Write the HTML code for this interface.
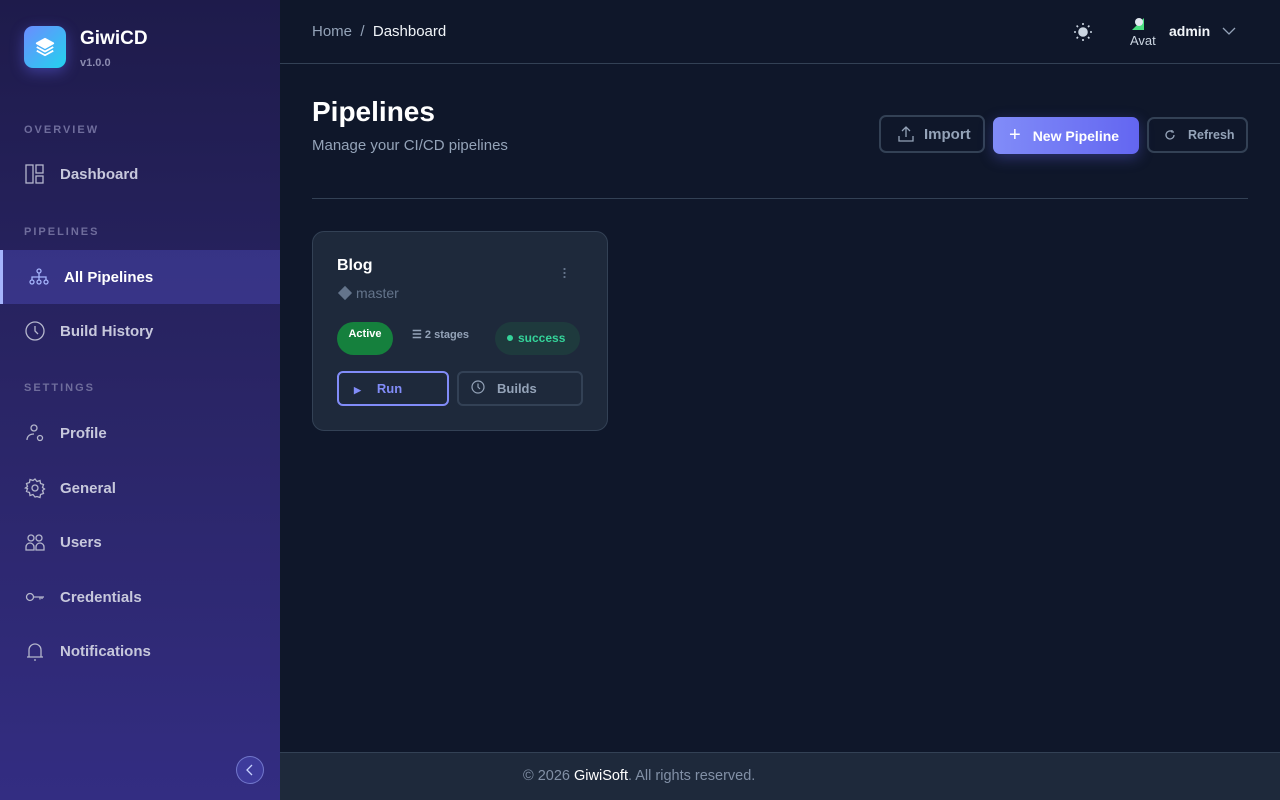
<!DOCTYPE html>
<html><head><meta charset="utf-8"><style>
*{box-sizing:border-box;margin:0;padding:0}
body{width:1280px;height:800px;overflow:hidden;font-family:"Liberation Sans",sans-serif;background:#0f172a;position:relative}
.sb{position:absolute;left:0;top:0;width:280px;height:800px;background:linear-gradient(180deg,#1e1b4b 0%,#2a2566 50%,#332d82 100%)}
.logo{position:absolute;left:24px;top:26px;width:42px;height:42px;border-radius:9px;background:linear-gradient(135deg,#6b8cff,#22d3ee);box-shadow:0 4px 14px rgba(99,102,241,.45);display:flex;align-items:center;justify-content:center}
.brand{position:absolute;left:80px;top:28px;color:#fff;font-weight:bold;font-size:19px}
.ver{position:absolute;left:80px;top:57px;color:#8b8bb0;font-size:11px;font-weight:bold}
.sec{position:absolute;left:24px;color:#6f6d9c;font-size:11px;font-weight:bold;letter-spacing:2px}
.it{position:absolute;left:0;width:280px;height:54px;display:flex;align-items:center;padding-left:24px;color:#c7c8dc;font-size:15px;font-weight:bold}
.it svg{width:22px;height:22px;margin-right:14px;stroke:#b4b6cc;fill:none;stroke-width:1.3}
.act{background:rgba(99,102,241,.28);border-left:3px solid #a5b4fc;padding-left:25px;color:#fff}
.act svg{stroke:#a5b4fc}
.col{position:absolute;left:236px;top:756px;width:28px;height:28px;border-radius:50%;border:1px solid rgba(165,180,252,.5);background:rgba(99,102,241,.25);display:flex;align-items:center;justify-content:center}
.top{position:absolute;left:280px;top:0;width:1000px;height:64px;border-bottom:1px solid #334155}
.bc{position:absolute;left:32px;top:23px;font-size:15px;color:#94a3b8}
.bc b{color:#f1f5f9;font-weight:normal}
h1{position:absolute;left:312px;top:96px;color:#fff;font-size:28px}
.sub{position:absolute;left:312px;top:137px;color:#94a3b8;font-size:15px}
.btn{position:absolute;height:38px;border-radius:7px;border:2px solid #334155;color:#94a3b8;font-weight:bold;font-size:14px;display:flex;align-items:center}
.hr{position:absolute;left:312px;top:198px;width:936px;height:1px;background:#334155}
.card{position:absolute;left:312px;top:231px;width:296px;height:200px;border-radius:12px;background:#1e293b;border:1px solid #334155}
.foot{position:absolute;left:280px;top:752px;width:1000px;height:48px;background:#1e293b;border-top:1px solid #334155;color:#8290a6;font-size:14.5px}
</style></head><body>
<div class="sb">
<div class="logo"><svg width="22" height="22" viewBox="0 0 24 24" fill="none" stroke="#fff" stroke-width="2" stroke-linejoin="round"><path d="M12 3l9 5-9 5-9-5z" fill="#fff"/><path d="M3 12l9 5 9-5M3 16l9 5 9-5"/></svg></div>
<div class="brand">GiwiCD</div><div class="ver">v1.0.0</div>
<div class="sec" style="top:124px">OVERVIEW</div>
<div class="it" style="top:147px"><svg viewBox="0 0 22 22"><rect x="2" y="2" width="7" height="18"/><rect x="12" y="2" width="7" height="8"/><rect x="12" y="13" width="7" height="7"/></svg>Dashboard</div>
<div class="sec" style="top:226px">PIPELINES</div>
<div class="it act" style="top:250px"><svg viewBox="0 0 22 22"><circle cx="11" cy="5" r="2"/><circle cx="4" cy="16" r="2"/><circle cx="11" cy="16" r="2"/><circle cx="18" cy="16" r="2"/><path d="M11 7v7M4 14v-3h14v3"/></svg>All Pipelines</div>
<div class="it" style="top:304px"><svg viewBox="0 0 22 22"><circle cx="11" cy="11" r="9"/><path d="M11 6v5l3 3"/></svg>Build History</div>
<div class="sec" style="top:382px">SETTINGS</div>
<div class="it" style="top:406px"><svg viewBox="0 0 22 22"><circle cx="10" cy="6" r="3"/><path d="M3 18c0-4 3-6 7-6"/><circle cx="16" cy="16" r="2.5"/></svg>Profile</div>
<div class="it" style="top:461px"><svg viewBox="0 0 22 22"><circle cx="11" cy="11" r="3"/><path d="M11 2l2 2.5 3-1 .5 3 3 1-1 3 2 1.5-2 1.5 1 3-3 1-.5 3-3-1L11 20l-2-2.5-3 1-.5-3-3-1 1-3L1.5 11l2-1.5-1-3 3-1 .5-3 3 1z"/></svg>General</div>
<div class="it" style="top:515px"><svg viewBox="0 0 22 22"><circle cx="7" cy="7" r="3"/><circle cx="15" cy="7" r="3"/><path d="M2 19v-3a4 4 0 018 0v3zM12 19v-3a4 4 0 018 0v3z"/></svg>Users</div>
<div class="it" style="top:570px"><svg viewBox="0 0 22 22"><circle cx="6" cy="11" r="3.5"/><path d="M9.5 11H20M16 11v2.5M18 11v2"/></svg>Credentials</div>
<div class="it" style="top:624px"><svg viewBox="0 0 22 22"><path d="M5 17V10a6 6 0 0112 0v7zM3 17h16M10 20h2"/></svg>Notifications</div>
<div class="col"><svg width="10" height="12" viewBox="0 0 10 12" fill="none" stroke="#c7d2fe" stroke-width="1.3"><path d="M7 1L2 6l5 5"/></svg></div>
</div>
<div class="top">
<div class="bc">Home &nbsp;/&nbsp; <b>Dashboard</b></div>
<svg style="position:absolute;left:794px;top:23px" width="18" height="18" viewBox="0 0 18 18" stroke="#cbd5e1" stroke-width="1.6"><circle cx="9" cy="9" r="4" fill="#cbd5e1"/><path d="M9 0v2M9 16v2M0 9h2M16 9h2M2.6 2.6l1.4 1.4M14 14l1.4 1.4M2.6 15.4L4 14M14 4l1.4-1.4"/></svg>
<div style="position:absolute;left:848px;top:16px;width:32px;height:32px;overflow:hidden;color:#cbd5e1;font-size:13px"><svg width="16" height="16" viewBox="0 0 16 16" style="position:absolute;left:2px;top:0"><path d="M2 14L14 2v12z" fill="#4ade80"/><circle cx="9" cy="6" r="4" fill="#e2e8f0"/></svg><span style="position:absolute;left:2px;top:17px">Avat</span></div>
<div style="position:absolute;left:889px;top:23px;color:#f1f5f9;font-size:14px;font-weight:bold">admin</div>
<svg style="position:absolute;left:942px;top:27px" width="14" height="9" viewBox="0 0 14 9" fill="none" stroke="#94a3b8" stroke-width="1.3"><path d="M1 1l6 6 6-6"/></svg>
</div>
<h1>Pipelines</h1>
<div class="sub">Manage your CI/CD pipelines</div>
<div class="btn" style="left:879px;top:115px;width:106px;padding-left:17px;font-size:15px"><svg width="16" height="16" viewBox="0 0 16 16" fill="none" stroke="#94a3b8" stroke-width="1.3" style="margin-right:10px"><path d="M8 11V2M4 5l4-4 4 4M1 10v5h14v-5"/></svg>Import</div>
<div class="btn" style="left:993px;top:117px;width:146px;border:none;background:linear-gradient(90deg,#818cf8,#6366f1);color:#fff;padding-left:16px;box-shadow:0 4px 14px rgba(99,102,241,.35);height:37px"><span style="font-size:20px;font-weight:normal;margin-right:12px">+</span>New Pipeline</div>
<div class="btn" style="left:1147px;top:117px;width:101px;height:36px;padding-left:15px;font-size:12.5px"><svg width="12" height="12" viewBox="0 0 12 12" fill="none" stroke="#94a3b8" stroke-width="1.3" style="margin-right:12px"><path d="M10 6a4 4 0 11-2-3.5M8 1v2h2"/></svg>Refresh</div>
<div class="hr"></div>
<div class="card">
<div style="position:absolute;left:24px;top:25px;color:#fff;font-weight:bold;font-size:16px">Blog</div>
<div style="position:absolute;left:250px;top:35px;width:3px;height:12px;background:radial-gradient(circle,#64748b 1px,transparent 1.2px) 0 0/3px 4px"></div>
<div style="position:absolute;left:24px;top:53px;color:#64748b;font-size:14px"><span style="display:inline-block;width:10px;height:10px;background:#64748b;transform:rotate(45deg);margin:0 6px 0 3px"></span>master</div>
<div style="position:absolute;left:24px;top:90px;width:56px;height:33px;border-radius:17px;background:#15803d;color:#fff;font-size:11px;font-weight:bold;text-align:center;padding-top:6px">Active</div>
<div style="position:absolute;left:99px;top:96px;color:#94a3b8;font-size:11px;font-weight:bold">☰ 2 stages</div>
<div style="position:absolute;left:182px;top:90px;width:85px;height:33px;border-radius:17px;background:#1e3a3d;color:#34d399;font-size:12px;font-weight:bold;padding:9px 0 0 12px"><span style="display:inline-block;width:6px;height:6px;border-radius:50%;background:#34d399;margin-right:5px;vertical-align:1px"></span>success</div>
<div style="position:absolute;left:24px;top:139px;width:112px;height:35px;border:2px solid #818cf8;border-radius:6px;color:#818cf8;font-size:13px;font-weight:bold;padding:8px 0 0 15px"><span style="font-size:9px;margin-right:16px">▶</span>Run</div>
<div style="position:absolute;left:144px;top:139px;width:126px;height:35px;border:2px solid #334155;border-radius:6px;color:#94a3b8;font-size:13px;font-weight:bold;padding:8px 0 0 12px;display:flex"><svg width="14" height="14" viewBox="0 0 14 14" fill="none" stroke="#94a3b8" stroke-width="1.2" style="margin:-1px 12px 0 0"><circle cx="7" cy="7" r="6"/><path d="M7 3.5V7l2 2"/></svg>Builds</div>
</div>
<div class="foot"><div style="position:absolute;left:243px;top:15px">© 2026 <span style="color:#fff">GiwiSoft</span>. All rights reserved.</div></div>
</body></html>
